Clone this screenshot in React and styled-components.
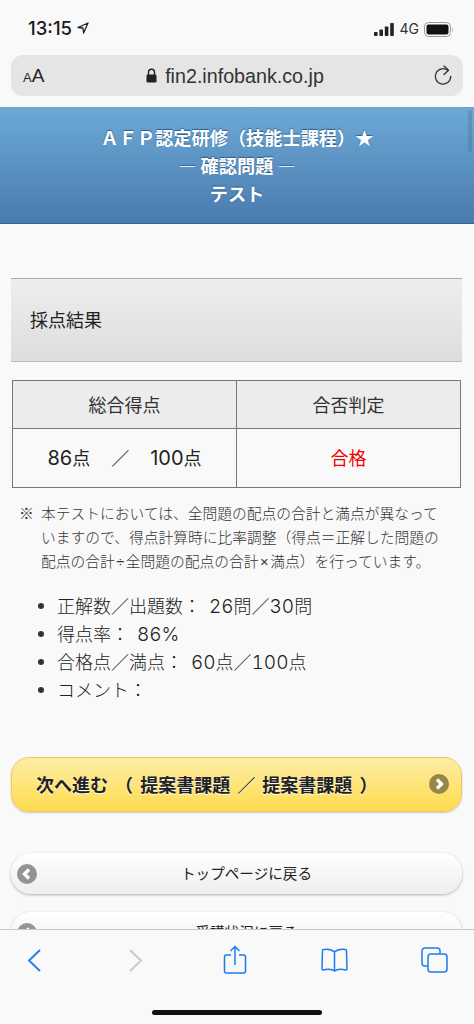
import React from "react";
import styled, { createGlobalStyle } from "styled-components";

const Global = createGlobalStyle`
  html, body {
    margin: 0;
    padding: 0;
    background: #f9f9f9;
  }
  * {
    box-sizing: border-box;
  }
`;

const JP = `"Noto Sans CJK JP", "Liberation Sans", sans-serif`;

const Page = styled.div`
  position: relative;
  width: 474px;
  height: 1024px;
  overflow: hidden;
  background: #f9f9f9;
  font-family: ${JP};
  color: #222;
`;

// Safari chrome

const StatusBar = styled.div`
  height: 55px;
  padding: 17px 0 0 28px;
  display: flex;
  justify-content: space-between;
  align-items: flex-start;
`;
const Clock = styled.div`
  display: flex;
  align-items: center;
  gap: 5px;
  font: 500 18.5px/22px Inter, "Liberation Sans", sans-serif;
  color: #1a1a1a;
`;
const StatusRight = styled.div`
  display: flex;
  align-items: center;
  gap: 5px;
  padding-right: 20px;
  height: 22px;
  margin-top: 1px;
  font: 400 14px/22px Inter, "Liberation Sans", sans-serif;
  color: #333;
`;
const AddressBar = styled.div`
  margin: 0 11px;
  height: 41px;
  border-radius: 12px;
  background: #e5e5e5;
  display: flex;
  align-items: center;
  justify-content: space-between;
  padding: 0 10px 0 12px;
`;
const TextSize = styled.div`
  padding-top: 2px;
  font: 400 19px/24px "Liberation Sans", sans-serif;
  color: #222;
  width: 40px;
  small {
    font-size: 13px;
  }
`;
const Url = styled.div`
  display: flex;
  align-items: center;
  gap: 8px;
  margin-left: -26px;
  font: 400 19.7px/24px "Liberation Sans", sans-serif;
  color: #333;
`;
const ChromeTop = styled.div`
  height: 107px;
  background: #f9f9f9;
`;

// Blue header

const Header = styled.header`
  position: relative;
  height: 117px;
  padding-top: 15px;
  text-align: center;
  background: linear-gradient(#6ca9d6, #4a7bae);
  border-top: 1px solid #7f9db8;
  border-bottom: 1px solid #2c6798;
  color: #fff;
  font-weight: 700;
  font-size: 18.2px;
  line-height: 28px;
  text-shadow: 0 -1px 1px #2f5c8a;
`;
const ScrollThumb = styled.div`
  position: absolute;
  top: 2px;
  right: 2px;
  width: 4px;
  height: 42px;
  border-radius: 2px;
  background: rgba(60, 90, 120, 0.25);
`;

// Content

const Main = styled.main`
  padding: 54px 12px 0 11px;
`;
const SectionTitle = styled.h2`
  margin: 0;
  height: 84px;
  padding: 0 0 2px 19px;
  display: flex;
  align-items: center;
  font-size: 18px;
  font-weight: 400;
  color: #222;
  background: linear-gradient(#eeeeee, #dddddd);
  border-top: 1px solid #aaa;
  border-bottom: 1px solid #bbb;
`;
const Score = styled.table`
  width: 449px;
  margin: 18px 0 0 1px;
  border-collapse: collapse;
  table-layout: fixed;
  font-size: 18px;
`;
const HeadCell = styled.th`
  height: 48px;
  padding: 0 0 2px;
  font-weight: 400;
  color: #333;
  background: #ececec;
  border: 1px solid #777;
`;
const ValueCell = styled.td`
  height: 59px;
  padding: 0 0 2px;
  text-align: center;
  color: ${(p) => (p.$red ? "#f00000" : "#222")};
  font-size: 18px;
  border: 1px solid #777;
  white-space: pre;
`;
const Num = styled.span`
  font-family: Inter, "Liberation Sans", sans-serif;
  font-size: 20px;
`;
const Slash = styled.span`
  margin: 0 3px;
  color: #111;
`;
const Note = styled.p`
  position: relative;
  width: 406px;
  margin: 13px 0 0 30px;
  font-size: 14.75px;
  line-height: 24px;
  font-weight: 300;
  color: #333;
`;
const NoteMark = styled.span`
  position: absolute;
  left: -22px;
  top: 0;
`;
const Narrow = styled.span`
  margin: 0 1.5px;
  font-family: "Liberation Sans", sans-serif;
`;
const Stats = styled.ul`
  margin: 18px 0 0;
  padding: 0 0 0 46px;
  list-style: none;
  font-size: 18px;
  line-height: 27px;
  font-weight: 300;
  color: #222;
  word-spacing: 4px;
`;
const StatRow = styled.li`
  position: relative;
  &::before {
    content: "";
    position: absolute;
    left: -19px;
    top: 11px;
    width: 6px;
    height: 6px;
    border-radius: 50%;
    background: #333;
  }
`;
const StatNum = styled.span`
  font-family: Inter, "Liberation Sans", sans-serif;
  font-size: 19px;
  font-weight: 300;
  font-variant-numeric: tabular-nums;
`;

// Buttons

const NextButton = styled.a`
  margin-top: 54px;
  height: 55px;
  display: flex;
  align-items: center;
  justify-content: space-between;
  padding: 0 12px 2px 24px;
  border-radius: 18px;
  border: 1px solid #f0c95a;
  background: linear-gradient(#feeda6, #ffdc4e);
  box-shadow: 0 1px 2px rgba(0, 0, 0, 0.2);
  font-size: 18px;
  font-weight: 700;
  color: #222;
  white-space: pre;
  word-spacing: 3px;
  text-shadow: 0 1px 0 #fff;
`;
const BackButton = styled.a`
  position: relative;
  height: 41px;
  margin-top: ${(p) => p.$gap}px;
  display: flex;
  align-items: center;
  justify-content: center;
  border-radius: 20px;
  background: linear-gradient(#ffffff, #eeeeee);
  box-shadow: 0 1px 3px rgba(0, 0, 0, 0.3);
  font-size: 14.6px;
  color: #222;
  padding: 0 0 3px 20px;
`;
const BackBadge = styled.span`
  position: absolute;
  left: 6px;
  top: 11px;
  display: flex;
`;

// Bottom toolbar lies over the scrolled page

const Toolbar = styled.nav`
  position: absolute;
  left: 0;
  right: 0;
  bottom: 0;
  height: 95px;
  background: #f9f9f9;
  border-top: 1px solid #c9c9c9;
`;
const ToolRow = styled.div`
  height: 60px;
  display: grid;
  grid-template-columns: repeat(5, 99.9px);
  margin-left: -15px;
  justify-items: center;
  align-items: center;
`;
const HomeBar = styled.div`
  position: absolute;
  left: 152px;
  bottom: 9px;
  width: 170px;
  height: 5px;
  border-radius: 3px;
  background: #111;
`;

const Chevron = ({ fill, left }) => (
  <svg width="20" height="20" viewBox="0 0 20 20">
    <circle cx="10" cy="10" r="10" fill={fill} />
    <path
      d={left ? "M12 5.5 L7.5 10 L12 14.5" : "M8 5.5 L12.5 10 L8 14.5"}
      fill="none"
      stroke="#fff"
      strokeWidth="3.4"
    />
  </svg>
);

const App = () => {
  return (
    <Page>
      <Global />
      <ChromeTop>
        <StatusBar>
          <Clock>
            13:15
            <svg width="12" height="12" viewBox="0 0 12 12">
              <path d="M11 1 L1 5.5 L6 6 L6.6 11 Z" fill="none" stroke="#222" strokeWidth="1.3" strokeLinejoin="round" />
            </svg>
          </Clock>
          <StatusRight>
            <svg width="21" height="13" viewBox="0 0 21 13">
              <rect x="0" y="9" width="3.6" height="4" rx="0.8" fill="#222" />
              <rect x="5.4" y="6.5" width="3.6" height="6.5" rx="0.8" fill="#222" />
              <rect x="10.8" y="3.5" width="3.6" height="9.5" rx="0.8" fill="#222" />
              <rect x="16.2" y="0" width="3.6" height="13" rx="0.8" fill="#222" />
            </svg>
            <span>4G</span>
            <svg width="30" height="15" viewBox="0 0 30 15">
              <rect x="0.5" y="0.5" width="26" height="14" rx="4" fill="none" stroke="#999" />
              <rect x="2.5" y="2.5" width="22" height="10" rx="2" fill="#111" />
              <path d="M28 5 Q29.5 7.5 28 10 Z" fill="#999" />
            </svg>
          </StatusRight>
        </StatusBar>
        <AddressBar>
          <TextSize>
            <small>A</small>A
          </TextSize>
          <Url>
            <svg width="11" height="15" viewBox="0 0 11 15">
              <path d="M2.5 7 V4.2 a3 3 0 0 1 6 0 V7" fill="none" stroke="#222" strokeWidth="1.4" />
              <rect x="0.5" y="6.5" width="10" height="8" rx="1.3" fill="#222" />
            </svg>
            fin2.infobank.co.jp
          </Url>
          <svg width="20" height="22" viewBox="0 0 20 22">
            <path d="M15 5.5 A7.700 7.700 0 1 0 17.700 11.500" fill="none" stroke="#333" strokeWidth="1.3" strokeLinecap="round" />
            <path d="M11 1 L15.500 5.200 L11 9.500" fill="none" stroke="#333" strokeWidth="1.3" strokeLinecap="round" strokeLinejoin="round" />
          </svg>
        </AddressBar>
      </ChromeTop>

      <Header>
        <ScrollThumb />
        <div>ＡＦＰ認定研修（技能士課程）★</div>
        <div>― 確認問題 ―</div>
        <div>テスト</div>
      </Header>

      <Main>
        <SectionTitle>採点結果</SectionTitle>
        <Score>
          <thead>
            <tr>
              <HeadCell>総合得点</HeadCell>
              <HeadCell>合否判定</HeadCell>
            </tr>
          </thead>
          <tbody>
            <tr>
              <ValueCell>
                <Num>86</Num>点　<Slash>／</Slash>　<Num>100</Num>点
              </ValueCell>
              <ValueCell $red>合格</ValueCell>
            </tr>
          </tbody>
        </Score>
        <Note>
          <NoteMark>※</NoteMark>本テストにおいては、全問題の配点の合計と満点が異なっていますので、得点計算時に比率調整（得点＝正解した問題の配点の合計<Narrow>÷</Narrow>全問題の配点の合計<Narrow>×</Narrow>満点）を行っています。
        </Note>
        <Stats>
          <StatRow>
            正解数／出題数： <StatNum>26</StatNum>問／<StatNum>30</StatNum>問
          </StatRow>
          <StatRow>
            得点率： <StatNum>86%</StatNum>
          </StatRow>
          <StatRow>
            合格点／満点： <StatNum>60</StatNum>点／<StatNum>100</StatNum>点
          </StatRow>
          <StatRow>コメント：</StatRow>
        </Stats>
        <NextButton>
          <span>次へ進む （ 提案書課題 ／ 提案書課題 ）</span>
          <Chevron fill="#958746" />
        </NextButton>
        <BackButton $gap={41}>
          <BackBadge>
            <Chevron fill="#949494" left />
          </BackBadge>
          トップページに戻る
        </BackButton>
        <BackButton $gap={18}>
          <BackBadge>
            <Chevron fill="#949494" left />
          </BackBadge>
          受講状況に戻る
        </BackButton>
      </Main>

      <Toolbar>
        <ToolRow>
          <svg width="24" height="24" viewBox="0 0 24 24">
            <path d="M17 2 L6 12.5 L17 23" fill="none" stroke="#1a7cf0" strokeWidth="1.8" />
          </svg>
          <svg width="24" height="24" viewBox="0 0 24 24">
            <path d="M7 2 L18 12.5 L7 23" fill="none" stroke="#c8c8c8" strokeWidth="1.8" />
          </svg>
          <svg width="24" height="30" viewBox="0 0 24 30">
            <path d="M8 10 H3.5 a2 2 0 0 0 -2 2 V26 a2 2 0 0 0 2 2 H20.5 a2 2 0 0 0 2 -2 V12 a2 2 0 0 0 -2 -2 H16" fill="none" stroke="#1a7cf0" strokeWidth="1.5" />
            <path d="M12 20 V1.5 M7.5 6 L12 1.5 L16.500 6" fill="none" stroke="#1a7cf0" strokeWidth="1.5" />
          </svg>
          <svg width="27" height="24" viewBox="0 0 27 24">
            <path d="M13.5 4 C11 1.500 6 1 2.500 1.500 a1 1 0 0 0 -1 1 L1 21 Q1 22 2 22 C6 21 11 21 13.500 23 C16 21 21 21 25 22 Q26 22 26 21 L25.500 2.500 a1 1 0 0 0 -1 -1 C21 1 16 1.500 13.500 4 Z M13.500 4 V23" fill="none" stroke="#1a7cf0" strokeWidth="1.5" strokeLinejoin="round" />
          </svg>
          <svg width="27" height="26" viewBox="0 0 27 26">
            <rect x="7" y="7" width="19" height="18" rx="3" fill="none" stroke="#1a7cf0" strokeWidth="1.5" />
            <path d="M7 19 H4 a3 3 0 0 1 -3 -3 V4 a3 3 0 0 1 3 -3 H16 a3 3 0 0 1 3 3 V7" fill="none" stroke="#1a7cf0" strokeWidth="1.5" />
          </svg>
        </ToolRow>
        <HomeBar />
      </Toolbar>
    </Page>
  );
};

export default App;
